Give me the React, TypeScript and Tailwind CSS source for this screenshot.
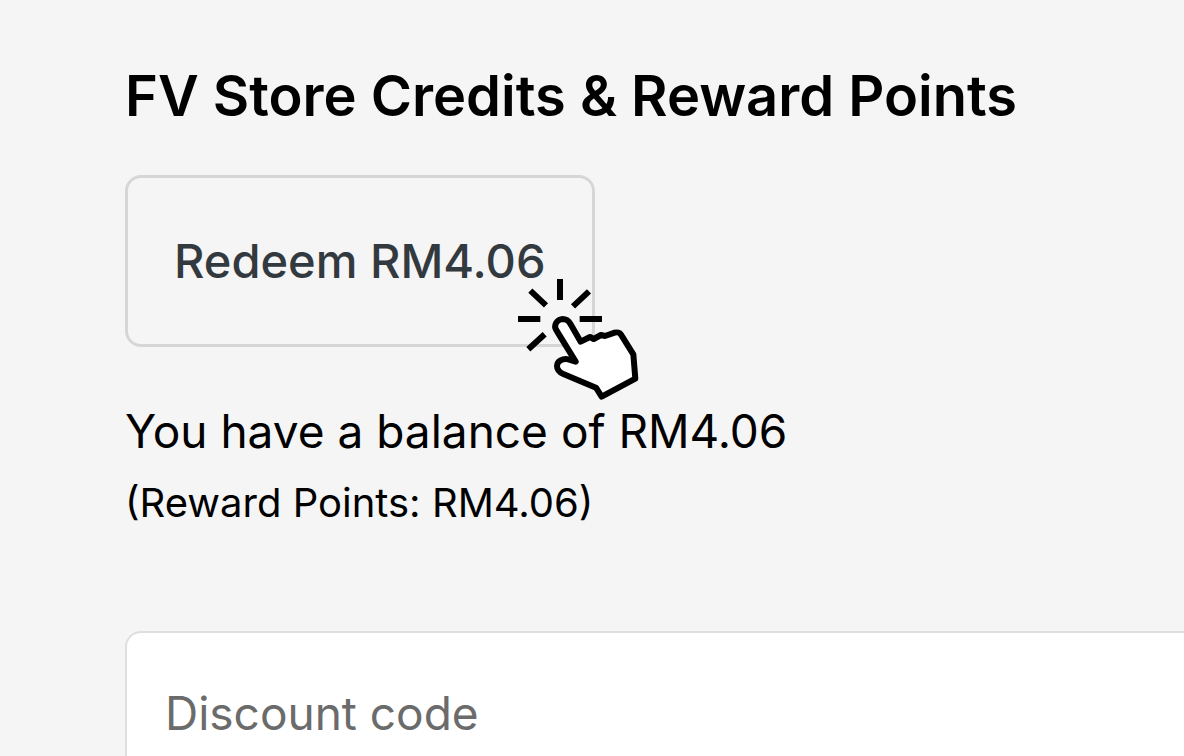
import React, { useState } from 'react';

const ClickPointer: React.FC = () => (
    <svg
        aria-hidden="true"
        viewBox="45 36 378 378"
        fill="none"
        stroke="#000"
        className="pointer-events-none absolute -right-[46px] -bottom-14 h-[126px] w-[126px]"
    >
        <path
            strokeWidth="18"
            d="M180 42V105M54 162H121M239 162H306M91 77L138 121M267 79L219 124M134 208L85 253"
        />
        <path
            fill="#fff"
            strokeWidth="18"
            strokeLinejoin="round"
            d="M242 230L211 176C205 166 198 162 188 162C173 163 163 176 166 189C167 193 170 197 173 202L227 290L205 283C188 280 171 288 171 303C171 314 179 322 190 327L288 368L305 395L406 341L400 268L363 209C360 203 351 201 344 203L315 213L303 210L281 222L270 216Z"
        />
    </svg>
);

export default function App() {
    const [code, setCode] = useState('');

    return (
        <main className="h-screen overflow-hidden bg-[#f5f5f5] pt-16 pl-[125px] font-['Inter',sans-serif] text-black">
            <h1 className="text-[56px] leading-[64px] font-semibold">FV Store Credits &amp; Reward Points</h1>

            <div className="relative mt-[47px] w-fit">
                <button
                    type="button"
                    className="rounded-2xl border-3 border-[#d6d6d6] px-[46px] py-14 text-[47px] leading-[54px] font-medium text-[#333a3f]"
                >
                    Redeem RM4.06
                </button>
                <ClickPointer />
            </div>

            <p className="mt-14 text-[46px] leading-[56px]">You have a balance of RM4.06</p>
            <p className="mt-4 text-[40px] leading-[56px]">(Reward Points: RM4.06)</p>

            <input
                type="text"
                aria-label="Discount code"
                placeholder="Discount code"
                value={code}
                onChange={(e) => setCode(e.target.value)}
                className="mt-[100px] block h-[164px] w-full rounded-l-2xl border-2 border-r-0 border-[#dedede] bg-white px-[38px] text-[46px] text-black outline-none placeholder:text-[#6b6b6b]"
            />
        </main>
    );
}
